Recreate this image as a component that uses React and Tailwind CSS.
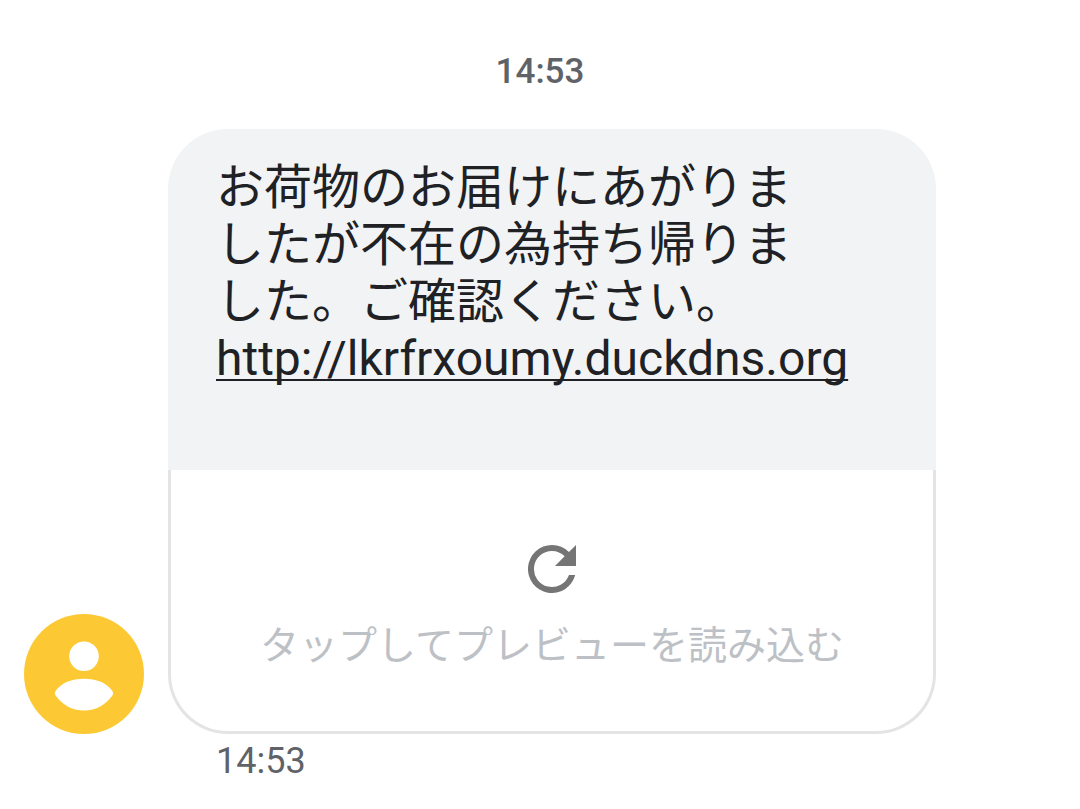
function Avatar() {
  return (
    <svg viewBox="0 0 120 120" className="size-30 shrink-0" role="img" aria-label="Unknown contact">
      <circle cx="60" cy="60" r="60" fill="#FCC934" />
      <circle cx="60" cy="42.300" r="14.800" fill="#FFFFFF" />
      <path
        d="M31.500 77C37 69 48 64.800 60 64.800S83 69 88.500 77Q90 79.500 88 82C82 90.500 72 96.500 60 96.500S38 90.500 32 82Q30 79.500 31.500 77Z"
        fill="#FFFFFF"
      />
    </svg>
  )
}

function RefreshIcon() {
  return (
    <svg viewBox="4 4 16 16" className="size-12" fill="#757575" aria-hidden="true">
      <path d="M17.65 6.35A7.96 7.96 0 0 0 12 4a8 8 0 1 0 7.730 10h-2.080A6 6 0 1 1 12 6c1.660 0 3.140.69 4.220 1.780L13 11h7V4z" />
    </svg>
  )
}

function PreviewButton() {
  return (
    <button
      type="button"
      className="flex w-full flex-col items-center rounded-b-[60px] border-3 border-t-0 border-[#E4E4E4] bg-white pt-[75px] pb-[59px]"
    >
      <RefreshIcon />
      <span className="mt-[27px] text-[39px] leading-[52px] text-[#BDC1C6]">
        タップしてプレビューを読み込む
      </span>
    </button>
  )
}

function App() {
  return (
    <main className="min-h-screen bg-white px-6 pt-12 font-['Roboto','Noto_Sans_CJK_JP',sans-serif]">
      <time className="block text-center text-[35px] leading-[48px] font-medium text-[#5F6368]">14:53</time>

      <div className="mt-[33px] flex items-end gap-6">
        <Avatar />
        <article className="mr-30 min-w-0 flex-1">
          <div className="rounded-t-[60px] bg-[#F1F3F4] px-12 pt-[30px] pb-[83px] text-[48px] leading-[57px] text-[#202124]">
            <p>
              お荷物のお届けにあがりま
              <br />
              したが不在の為持ち帰りま
              <br />
              した。ご確認ください。
            </p>
            <a
              href="http://lkrfrxoumy.duckdns.org"
              className="underline decoration-2 underline-offset-4 [text-decoration-skip-ink:none]"
            >
              http://lkrfrxoumy.duckdns.org
            </a>
          </div>
          <PreviewButton />
        </article>
      </div>

      <time className="mt-[3px] ml-48 block text-[36px] leading-[48px] text-[#5F6368]">14:53</time>
    </main>
  )
}

export default App
